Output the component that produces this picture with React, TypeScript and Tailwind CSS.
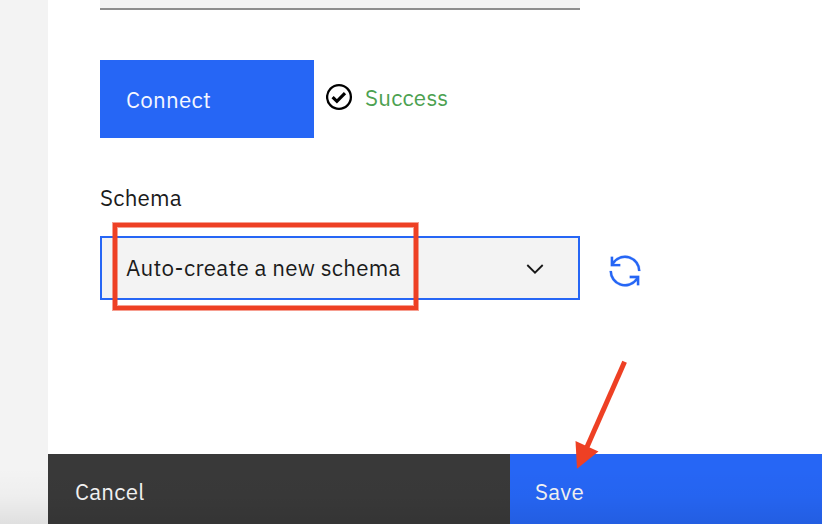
const font = "font-['IBM_Plex_Sans','Roboto','Liberation_Sans',sans-serif] text-[22.4px] leading-[30px] whitespace-nowrap";

function CheckIcon() {
  return (
    <svg className="ml-3 mt-[23px] h-7 w-7 shrink-0" viewBox="0 0 28 28" fill="none" stroke="#000">
      <circle cx="13" cy="14" r="11.9" strokeWidth="2.3" />
      <path d="M6.6 14.2 L10.9 18.3 L19 10.2" strokeWidth="3.2" />
    </svg>
  );
}

function RenewIcon() {
  return (
    <svg className="ml-[26px] mt-4 h-[38px] w-[38px] shrink-0" viewBox="0 0 32 32" fill="#2666f5" stroke="#2666f5" strokeWidth="0.15">
      <path d="M12 10H6.78A11 11 0 0 1 27 16h2A13 13 0 0 0 6 7.68V4H4v8h8zM20 22h5.22A11 11 0 0 1 5 16H3a13 13 0 0 0 23 8.32V28h2v-8h-8z" />
    </svg>
  );
}

export default function App() {
  return (
    <div className={`relative flex h-[524px] w-[822px] overflow-hidden bg-white text-[#1b1b1b] ${font}`}>
      <aside className="w-12 shrink-0 bg-[#f3f3f3]" />
      <main className="flex flex-1 flex-col">
        <div className="flex flex-1 flex-col pl-[52px]">
          <div className="h-[10px] w-[480px] shrink-0 border-b-2 border-[#8e8e8e] bg-[#f3f3f3]" />
          <div className="mt-[50px] flex h-[78px]">
            <button className="w-[214px] bg-[#2666f5] pb-px pl-[26px] pt-[2px] text-left text-[#f5f7ff]">
              <span className="tracking-[0.26px]">Connect</span>
            </button>
            <CheckIcon />
            <span className="ml-[11px] mt-[23px] tracking-[0.22px] text-[#4ca150]">Success</span>
          </div>
          <label className="mt-[45px] tracking-[0.2px]">Schema</label>
          <div className="mt-[23px] flex h-16">
            <div className="flex w-[480px] items-center justify-between border-2 border-[#2666f5] bg-[#f3f3f3] pl-[24px] pr-[33px]">
              <span className="tracking-[0.24px]">Auto-create a new schema</span>
              <svg className="h-5 w-5" viewBox="0 0 20 20" fill="none" stroke="#161616" strokeWidth="1.8">
                <path d="M2.3 7 L10 14.7 L17.7 7" />
              </svg>
            </div>
            <RenewIcon />
          </div>
        </div>
        <footer className="flex h-[70px] text-[#f4f4f4]">
          <button className="w-[462px] bg-[#393939] pl-[27px] pt-[5px] text-left">
            <span className="tracking-[0.24px]">Cancel</span>
          </button>
          <button className="flex-1 bg-[#2666f5] pl-[25px] pt-[5px] text-left">
            <span className="tracking-[0.26px]">Save</span>
          </button>
        </footer>
      </main>
      <div className="pointer-events-none absolute inset-x-0 bottom-0 h-14 bg-gradient-to-b from-black/0 via-black/2 to-black/8" />
      <div className="pointer-events-none absolute left-[113px] top-[223px] h-[87px] w-[305px] border-4 border-[#ee4024] shadow-[0_0_0_1px_#ee402480,inset_0_0_0_1px_#ee402480]" />
      <svg className="pointer-events-none absolute left-[570px] top-[355px] h-[120px] w-[65px]" viewBox="570 355 65 120">
        <path d="M624.6 361.8 L587 447" stroke="#ee4024" strokeWidth="5" />
        <path d="M575.5 441 L598.5 451.5 L577 468.7 Z" fill="#ee4024" />
      </svg>
    </div>
  );
}
